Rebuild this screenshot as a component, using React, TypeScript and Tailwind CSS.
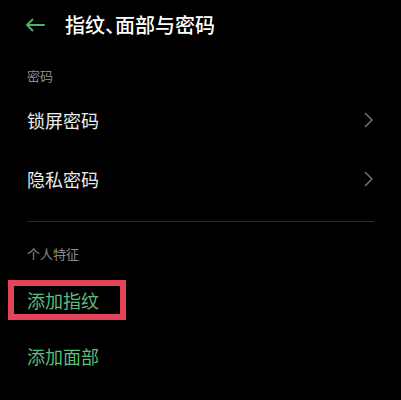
import React from 'react';

const font = { fontFamily: '"Noto Sans CJK SC", "Noto Sans", sans-serif' };

const Chevron = () => (
  <svg width="10" height="16" viewBox="0 0 10 16" fill="none">
    <path d="M1.5 1.5 L8 8 L1.5 14.5" stroke="#6e6e6e" strokeWidth="1.6" strokeLinecap="round" strokeLinejoin="round" />
  </svg>
);

const NavRow: React.FC<{ label: string }> = ({ label }) => (
  <div className="flex h-[59px] items-center justify-between pl-[27px] pr-[27px]">
    <span className="text-[18px] leading-[24px] text-[#ececec]">{label}</span>
    <Chevron />
  </div>
);

export default function App() {
  return (
    <div className="h-[400px] w-[401px] overflow-hidden bg-black" style={font}>
      {/* Header */}
      <div className="flex h-[50px] items-center pl-[25px]">
        <svg width="20" height="14" viewBox="0 0 20 14" fill="none">
          <path d="M19 7 H2 M7.5 1.5 L2 7 L7.5 12.5" stroke="#4fb36f" strokeWidth="1.8" strokeLinecap="round" strokeLinejoin="round" />
        </svg>
        <h1 className="ml-[20px] text-[20px] font-medium leading-[28px] text-white">
          指纹<span className="[font-feature-settings:'halt']">、</span>面部与密码
        </h1>
      </div>

      {/* 密码 */}
      <div className="px-[27px] pt-[17px] pb-[5px] text-[13px] leading-[18px] text-[#8c8c8c]">密码</div>
      <NavRow label="锁屏密码" />
      <NavRow label="隐私密码" />

      <div className="mx-[27px] mt-[13px] h-px bg-[#2b2b2b]" />

      {/* 个人特征 */}
      <div className="px-[27px] pt-[23px] pb-[9px] text-[13px] leading-[18px] text-[#8c8c8c]">个人特征</div>
      <div className="relative flex h-[56px] items-center pl-[27px]">
        <span className="text-[18px] leading-[24px] text-[#5cbd7c]">添加指纹</span>
        <div className="absolute left-[8px] top-[8px] h-[40px] w-[118px] border-[6px] border-[#e5435b]" />
      </div>
      <div className="flex h-[56px] items-center pl-[27px]">
        <span className="text-[18px] leading-[24px] text-[#5cbd7c]">添加面部</span>
      </div>
    </div>
  );
}
